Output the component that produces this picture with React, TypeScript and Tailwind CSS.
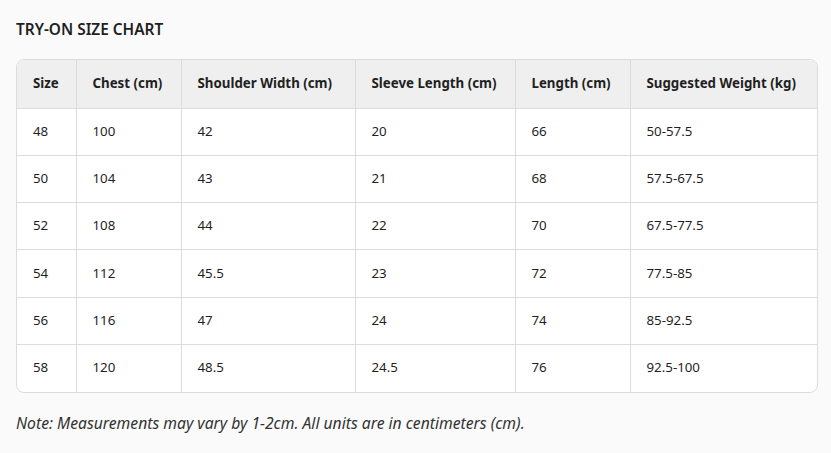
import React from "react";

const headers = ["Size", "Chest (cm)", "Shoulder Width (cm)", "Sleeve Length (cm)", "Length (cm)", "Suggested Weight (kg)"];
const widths = [59, 105, 174, 160, 115, 189];
const rows = [
  ["48", "100", "42", "20", "66", "50-57.5"],
  ["50", "104", "43", "21", "68", "57.5-67.5"],
  ["52", "108", "44", "22", "70", "67.5-77.5"],
  ["54", "112", "45.5", "23", "72", "77.5-85"],
  ["56", "116", "47", "24", "74", "85-92.5"],
  ["58", "120", "48.5", "24.5", "76", "92.5-100"],
];

export default function App() {
  return (
    <div
      className="w-[831px] h-[453px] bg-[#fafafa] px-4 pt-[19px] text-[#1f1f1f]"
      style={{ fontFamily: '"Noto Sans", "Open Sans", sans-serif' }}
    >
      <h2 className="text-[15.4px] font-semibold leading-[22px]">TRY-ON SIZE CHART</h2>
      <div className="mt-[18px] w-[802px] overflow-hidden rounded-[8px] border border-[#dcdcdc] bg-white">
        <table className="w-full table-fixed border-collapse text-[13.3px]">
          <colgroup>
            {widths.map((w, i) => (
              <col key={i} style={{ width: w }} />
            ))}
          </colgroup>
          <thead>
            <tr className="h-[48px] bg-[#efefef]">
              {headers.map((h, i) => (
                <th
                  key={i}
                  className={`text-left font-bold pl-4 border-b border-[#dcdcdc] ${i > 0 ? "border-l" : ""}`}
                >
                  {h}
                </th>
              ))}
            </tr>
          </thead>
          <tbody>
            {rows.map((r, ri) => (
              <tr key={ri} className="h-[47.3px]">
                {r.map((c, ci) => (
                  <td
                    key={ci}
                    className={`pl-4 border-[#dcdcdc] ${ci > 0 ? "border-l" : ""} ${ri < rows.length - 1 ? "border-b" : ""}`}
                  >
                    {c}
                  </td>
                ))}
              </tr>
            ))}
          </tbody>
        </table>
      </div>
      <p className="mt-[19px] text-[15.7px] italic text-[#333]">
        Note: Measurements may vary by 1-2cm. All units are in centimeters (cm).
      </p>
    </div>
  );
}
